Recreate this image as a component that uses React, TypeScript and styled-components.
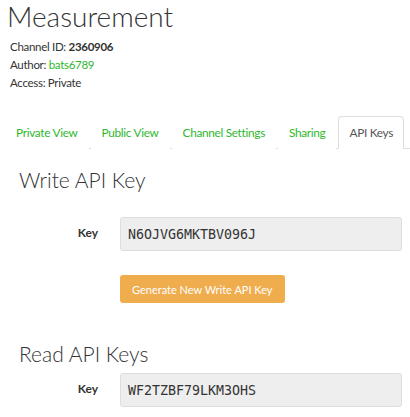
import React from 'react';
import styled, { createGlobalStyle } from 'styled-components';

const GlobalStyle = createGlobalStyle`
  body {
    margin: 0;
    background: #fff;
    font-family: Lato, "Open Sans", sans-serif;
    color: #333;
  }
`;

const Page = styled.div`
  width: 410px;
  height: 417px;
  overflow: hidden;
`;

const Title = styled.h1`
  margin: 0;
  padding-left: 7px;
  font-family: Lato, sans-serif;
  font-weight: 300;
  font-size: 28px;
  line-height: 32px;
  color: #333;
`;

const Info = styled.div`
  margin-top: 6px;
  padding-left: 10px;
  font-size: 11.5px;
  letter-spacing: -0.3px;
  line-height: 18px;
`;

const Line = styled.div``;

const Strong = styled.b`
  font-weight: 700;
`;

const Link = styled.a`
  color: #2eb82e;
  text-decoration: none;
`;

const Nav = styled.ul`
  list-style: none;
  display: flex;
  margin: 24px 0 0 5px;
  padding: 0;
  border-bottom: 1px solid #ddd;
`;

const Tab = styled.li<{ $active?: boolean }>`
  flex-shrink: 0;
  white-space: nowrap;
  padding: 8px 10px 8px;
  margin-bottom: -1px;
  margin-right: 2px;
  font-size: 11.8px;
  letter-spacing: -0.3px;
  line-height: 15px;
  color: ${p => (p.$active ? '#555' : '#2eb82e')};
  background: #fff;
  border: 1px solid ${p => (p.$active ? '#ddd' : 'transparent')};
  border-bottom-color: ${p => (p.$active ? '#fff' : 'transparent')};
  border-radius: 4px 4px 0 0;
`;

const Section = styled.section`
  padding: 0 8px 0 5px;
`;

const Heading = styled.h2<{ $top: number }>`
  margin: ${p => p.$top}px 0 0 14px;
  font-family: Lato, sans-serif;
  font-weight: 300;
  font-size: 21px;
  line-height: 26px;
  color: #333;
`;

const FormRow = styled.div<{ $top: number }>`
  display: grid;
  grid-template-columns: 93px 1fr;
  column-gap: 22px;
  align-items: start;
  margin-top: ${p => p.$top}px;
`;

const Label = styled.label`
  text-align: right;
  font-size: 12px;
  font-weight: 700;
  padding-top: 8px;
`;

const KeyBox = styled.div`
  height: 34px;
  box-sizing: border-box;
  border: 1px solid #ddd;
  border-radius: 3px;
  background: #eee;
  padding: 0 7px;
  display: flex;
  align-items: center;
  font-family: "DejaVu Sans Mono", monospace;
  font-size: 13.3px;
  color: #333;
`;

const Button = styled.button`
  grid-column: 2;
  justify-self: start;
  margin-top: 24px;
  height: 28px;
  padding: 0 12px;
  border: none;
  border-radius: 3px;
  background: #f0ad4e;
  color: #fff;
  font-family: Lato, sans-serif;
  font-size: 11px;
`;

export default function App() {
  return (
    <Page>
      <GlobalStyle />
      <Title>Measurement</Title>
      <Info>
        <Line>Channel ID: <Strong>2360906</Strong></Line>
        <Line>Author: <Link href="#">bats6789</Link></Line>
        <Line>Access: Private</Line>
      </Info>
      <Nav>
        <Tab>Private View</Tab>
        <Tab>Public View</Tab>
        <Tab>Channel Settings</Tab>
        <Tab>Sharing</Tab>
        <Tab $active>API Keys</Tab>
      </Nav>
      <Section>
        <Heading $top={18}>Write API Key</Heading>
        <FormRow $top={24}>
          <Label>Key</Label>
          <KeyBox>N6OJVG6MKTBV096J</KeyBox>
          <Button>Generate New Write API Key</Button>
        </FormRow>
        <Heading $top={38}>Read API Keys</Heading>
        <FormRow $top={6}>
          <Label>Key</Label>
          <KeyBox>WF2TZBF79LKM3OHS</KeyBox>
        </FormRow>
      </Section>
    </Page>
  );
}
